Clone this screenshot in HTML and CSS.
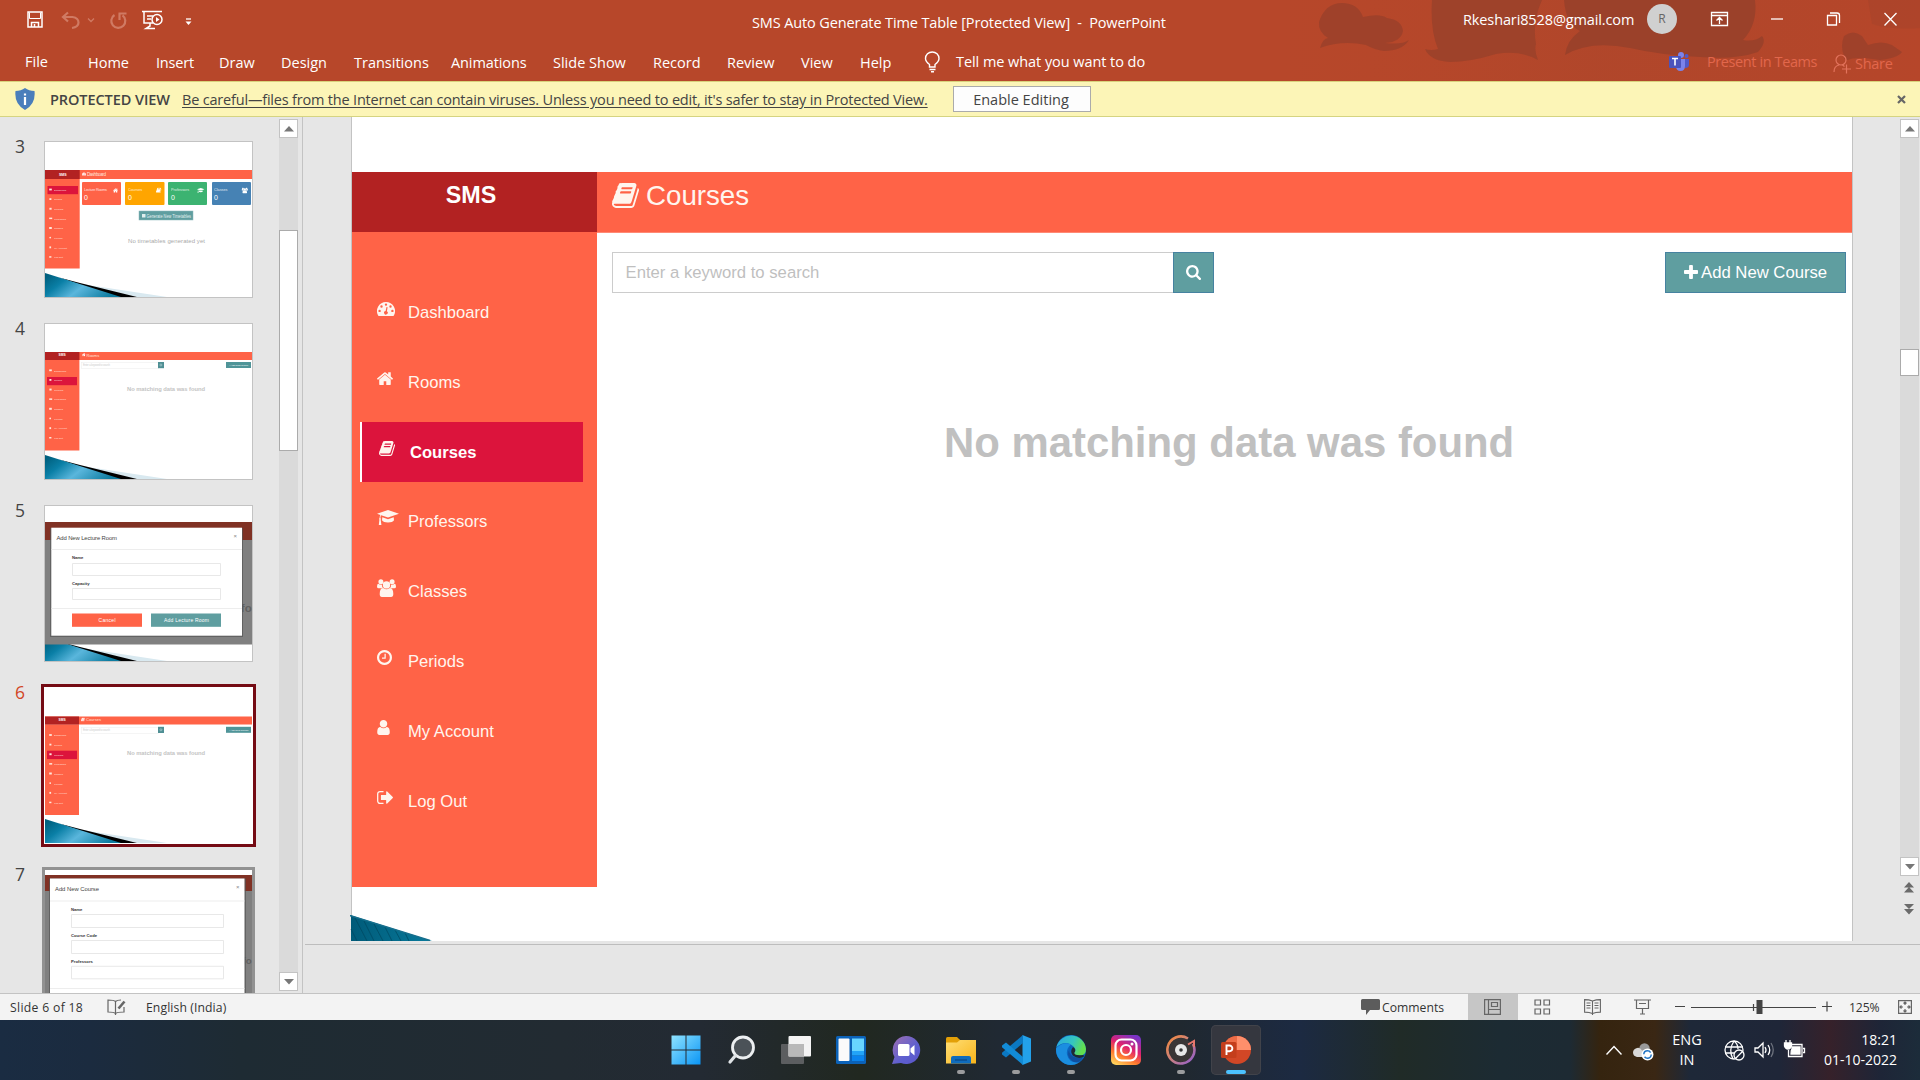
FILE: index.html
```
<!DOCTYPE html>
<html lang="en">
<head>
<meta charset="utf-8">
<title>SMS Auto Generate Time Table [Protected View] - PowerPoint</title>
<link rel="stylesheet" href="styles.css">
</head>
<body>
<svg class="defs" width="0" height="0">
  <defs>
    <linearGradient id="g-decor" x1="0" x2="1" y1="0.2" y2="0.6"><stop offset="0" stop-color="#00607f"/><stop offset=".25" stop-color="#0a7fa6"/><stop offset=".55" stop-color="#5ab6dc"/><stop offset="1" stop-color="#0e7ca0"/></linearGradient>
    <linearGradient id="g-win" x1="0" y1="0" x2="1" y2="1"><stop offset="0" stop-color="#8fe3ff"/><stop offset="1" stop-color="#0a95f5"/></linearGradient>
    <linearGradient id="g-fold" x1="0" y1="0" x2="1" y2="1"><stop offset="0" stop-color="#ffdf78"/><stop offset="1" stop-color="#f9b51a"/></linearGradient>
    <linearGradient id="g-chat" x1="0" y1="0" x2="1" y2="1"><stop offset="0" stop-color="#a070b0"/><stop offset=".6" stop-color="#5d5fd0"/><stop offset="1" stop-color="#5b55c8"/></linearGradient>
    <linearGradient id="g-insta" x1=".2" y1="1" x2=".7" y2="0"><stop offset="0" stop-color="#ffd35c"/><stop offset=".3" stop-color="#ff7a2e"/><stop offset=".6" stop-color="#e0226f"/><stop offset="1" stop-color="#7a34c8"/></linearGradient>
    <linearGradient id="g-edge" x1="0" y1="0" x2="1" y2=".3"><stop offset="0" stop-color="#2aa7e0"/><stop offset=".6" stop-color="#35c5c0"/><stop offset="1" stop-color="#62df50"/></linearGradient>
    <linearGradient id="g-disc" x1="0" y1="0" x2="1" y2="1"><stop offset="0" stop-color="#f58a3c"/><stop offset=".5" stop-color="#c88080"/><stop offset="1" stop-color="#8f5bd0"/></linearGradient>
    <symbol id="i-home" viewBox="97 236 1600 1300"><path d="M1472 992v480q0 26-19 45t-45 19h-384v-384h-256v384h-384q-26 0-45-19t-19-45v-480q0-1 .5-3t.5-3l575-474 575 474q1 2 1 6zm223-69l-62 74q-8 9-21 11h-3q-13 0-21-7l-692-577-692 577q-12 8-24 7-13-2-21-11l-62-74q-8-10-7-23.5t11-21.5l719-599q32-26 76-26t76 26l244 204v-195q0-14 9-23t23-9h192q14 0 23 9t9 23v408l219 182q10 8 11 21.5t-7 23.5z"/></symbol>
    <symbol id="i-book" viewBox="64 128 1664 1536"><path d="M1703 478q40 57 18 129l-275 906q-19 64-76.5 107.5t-122.5 43.5h-923q-77 0-148.5-53.5t-99.5-131.5q-24-67-2-127 0-4 3-27t4-37q1-8-3-21.5t-3-19.5q2-11 8-21t16.5-23.5 16.5-23.5q23-38 45-91.5t30-91.5q3-10 .5-30t-.5-28q3-11 17-28t17-23q21-36 42-92t25-90q1-9-2.5-32t.5-28q4-13 22-30.5t22-22.5q19-26 42.5-84.5t27.5-96.5q1-8-3-25.5t-2-26.5q2-8 9-18t18-23 17-21q8-12 16.5-30.5t15-35 16-36 19.5-32 26.5-23.5 36-11.5 47.5 5.5l-1 3q38-9 51-9h761q74 0 114 56t18 130l-274 906q-36 119-71.5 153.5t-128.5 34.5h-869q-27 0-38 15-11 16-1 43 24 70 144 70h923q29 0 56-15.5t35-41.5l300-987q7-22 5-57 38 15 59 43zm-1064 2q-4 13 2 22.5t20 9.5h608q13 0 25.5-9.5t16.5-22.5l21-64q4-13-2-22.5t-20-9.5h-608q-13 0-25.5 9.5t-16.5 22.5zm-83 256q-4 13 2 22.5t20 9.5h608q13 0 25.5-9.5t16.5-22.5l21-64q4-13-2-22.5t-20-9.5h-608q-13 0-25.5 9.5t-16.5 22.5z"/></symbol>
    <symbol id="i-clock" viewBox="128 128 1536 1536"><path d="M1024 544v448q0 14-9 23t-23 9h-320q-14 0-23-9t-9-23v-64q0-14 9-23t23-9h224v-352q0-14 9-23t23-9h64q14 0 23 9t9 23zm416 352q0-148-73-273t-198-198-273-73-273 73-198 198-73 273 73 273 198 198 273 73 273-73 198-198 73-273zm224 0q0 209-103 385.5t-279.5 279.5-385.5 103-385.5-103-279.5-279.5-103-385.5 103-385.5 279.5-279.5 385.5-103 385.5 103 279.5 279.5 103 385.5z"/></symbol>
    <symbol id="i-user" viewBox="256 128 1280 1536"><path d="M1536 1399q0 109-62.5 187t-150.5 78h-854q-88 0-150.5-78t-62.5-187q0-85 8.5-160.5t31.5-152 58.5-131 94-89 134.5-34.5q131 128 313 128t313-128q76 0 134.5 34.5t94 89 58.5 131 31.5 152 8.5 160.5zm-256-887q0 159-112.5 271.5t-271.5 112.5-271.5-112.5-112.5-271.5 112.5-271.5 271.5-112.5 271.5 112.5 112.5 271.5z"/></symbol>
    <symbol id="i-out" viewBox="64 256 1568 1280"><path d="M704 1440q0 4 1 20t.5 26.5-3 23.5-10 19.5-20.5 6.5h-320q-119 0-203.5-84.5t-84.5-203.5v-704q0-119 84.5-203.5t203.5-84.5h320q13 0 22.5 9.5t9.5 22.5q0 4 1 20t.5 26.5-3 23.5-10 19.5-20.5 6.5h-320q-66 0-113 47t-47 113v704q0 66 47 113t113 47h312l11.5 1 11.5 3 8 5.5 7 9 2 13.5zm928-544q0 26-19 45l-544 544q-19 19-45 19t-45-19-19-45v-288h-448q-26 0-45-19t-19-45v-384q0-26 19-45t45-19h448v-288q0-26 19-45t45-19 45 19l544 544q19 19 19 45z"/></symbol>
    <symbol id="i-search" viewBox="64 128 1664 1664"><path d="M1216 832q0-185-131.5-316.5t-316.5-131.5-316.5 131.5-131.5 316.5 131.5 316.5 316.5 131.5 316.5-131.5 131.5-316.5zm512 832q0 52-38 90t-90 38q-54 0-90-38l-343-342q-179 124-399 124-143 0-273.5-55.5t-225-150-150-225-55.5-273.5 55.5-273.5 150-225 225-150 273.5-55.5 273.5 55.5 225 150 150 225 55.5 273.5q0 220-124 399l343 343q37 37 37 90z"/></symbol>
    <symbol id="i-plus" viewBox="192 128 1408 1408"><path d="M1600 736v192q0 40-28 68t-68 28h-416v416q0 40-28 68t-68 28h-192q-40 0-68-28t-28-68v-416h-416q-40 0-68-28t-28-68v-192q0-40 28-68t68-28h416v-416q0-40 28-68t68-28h192q40 0 68 28t28 68v416h416q40 0 68 28t28 68z"/></symbol>
    <symbol id="i-dash" viewBox="0 0 18 14"><path fill-rule="evenodd" d="M9 0a9 9 0 0 1 7.8 13.5q-.3.5-.8.5H2q-.5 0-.8-.5A9 9 0 0 1 9 0zM2.6 7.7a1.2 1.2 0 1 0 0 2.4 1.2 1.2 0 0 0 0-2.4zM4.5 3.3a1.2 1.2 0 1 0 0 2.4 1.2 1.2 0 0 0 0-2.4zM9 1.4a1.2 1.2 0 1 0 0 2.4 1.2 1.2 0 0 0 0-2.4zM13.5 3.3a1.2 1.2 0 1 0 0 2.4 1.2 1.2 0 0 0 0-2.4zM15.4 7.7a1.2 1.2 0 1 0 0 2.4 1.2 1.2 0 0 0 0-2.4zM9.5 5l-.9 3.9a1.8 1.8 0 1 0 1.3.3l.7-4z"/></symbol>
    <symbol id="i-cap" viewBox="0 0 22 15"><path d="M11 0l11 3.8L11 7.6 4.2 5.3Q3.4 6 3.4 8q.9.6.3 1.7L4.400 15H1.800l.6-5.300Q1.700 8.700 2.600 8q.1-2 .8-3L0 3.800zM5.300 7.200L11 9.200l5.700-2 .3 3Q15.500 12.400 11 12.400T5 10.200z"/></symbol>
    <symbol id="i-users" viewBox="0 0 19 18"><path d="M3.900.3a2.500 2.500 0 1 1 0 5 2.500 2.500 0 0 1 0-5zM15.100.3a2.500 2.500 0 1 1 0 5 2.500 2.500 0 0 1 0-5zM9.500 2.200a3.700 3.700 0 1 1 0 7.400 3.700 3.700 0 0 1 0-7.400zM5.200 9.200H1.700Q0 9.200 0 7.700 0 4.800 1.300 4.800q2 1.400 3.600.8-.2 2 .9 3.200zM13.800 9.200h3.500q1.700 0 1.700-1.500 0-2.900-1.300-2.900-2 1.400-3.600.8.200 2-.9 3.200zM6.200 9q1.500 1.300 3.300 1.300T12.800 9q3.500 0 3.500 6 0 3-2.300 3H5q-2.300 0-2.300-3 0-6 3.500-6z"/></symbol>
    <symbol id="t-decor" viewBox="0 0 207 155"><path d="M30 141l92 14H92z" fill="#d9e9f0"/><path d="M14 135.500L35 141l57 14H70z" fill="#000"/><path d="M0 131l76 24H0z" fill="url(#g-decor)"/></symbol>
    <symbol id="t-nav" viewBox="0 0 207 155"><g fill="#fff0e6" font-size="2.500" opacity=".85"><text x="9" y="48.800">Dashboard</text><text x="9" y="58.400">Rooms</text><text x="9" y="68">Courses</text><text x="9" y="77.700">Professors</text><text x="9" y="87.300">Classes</text><text x="9" y="97">Periods</text><text x="9" y="106.600">My Account</text><text x="9" y="116.300">Log Out</text></g><g fill="#ffe6da"><rect x="4.200" y="46.600" width="2.600" height="1.800"/><rect x="4.400" y="56.200" width="2" height="1.800"/><rect x="4.400" y="65.800" width="2.200" height="1.900"/><rect x="4.200" y="75.600" width="3" height="1.500"/><rect x="4.200" y="85" width="2.600" height="2"/><circle cx="5.200" cy="95.600" r=".9"/><rect x="4.400" y="104.400" width="1.700" height="1.900"/><rect x="4.200" y="114.200" width="2.200" height="1.500"/></g></symbol>
    <symbol id="t-empty" viewBox="0 0 207 155"><rect x="36.500" y="38.500" width="77" height="6" fill="#fff" stroke="#eee" stroke-width=".6"/><text x="38" y="42.400" font-size="2.600" fill="#ccc" textLength="27">Enter a keyword to search</text><rect x="113" y="38" width="6" height="6.200" fill="#4f8f94"/><circle cx="115.900" cy="41" r="1" fill="none" stroke="#cfe5e6" stroke-width=".5"/><rect x="181" y="38" width="25" height="6" fill="#4f9498"/><text x="82" y="66.700" font-size="5.800" font-weight="bold" fill="#c4c4c4" textLength="78">No matching data was found</text></symbol>
  </defs>
</svg>

<header class="ribbon">
  <svg class="ribbon-art" width="640" height="81" viewBox="0 0 640 81">
    <defs><linearGradient id="g-fade" x1="0" x2="1"><stop offset="0" stop-color="#b0472a" stop-opacity="0"/><stop offset=".5" stop-color="#a5452b" stop-opacity=".35"/><stop offset="1" stop-color="#b5452a" stop-opacity=".5"/></linearGradient></defs>
    <rect width="640" height="81" fill="url(#g-fade)"/>
    <g fill="#9b412a">
      <path d="M40 48Q43 38 48 38Q38 32 39 22Q45 3 62 3Q78 3 83 17Q100 13 107 18Q122 20 123 31Q121 42 105 43Q122 45 129 40Q122 51 104 51Q95 50 86 45Q62 40 40 48z" opacity=".85"/>
      <path d="M152 0H262Q252 22 256 44Q254 50 258 60Q240 50 216 54Q190 62 170 62Q150 61 145 49Q151 51 158 49Q150 30 152 0z" opacity=".9"/>
      <path d="M284 0H475Q478 24 463 40Q475 42 482 36Q487 42 478 52Q455 60 420 57Q380 55 350 48Q310 40 285 55Q287 40 300 31Q286 25 284 0z"/>
      <path d="M564 56Q560 46 564 36Q573 29 582 36Q586 42 588 45Q602 40 612 45L622 52Q618 58 600 60Q575 56 568 60Q563 60 564 56z" opacity=".85"/>
      <path d="M588 0h52v28q-30 2-48-4z" opacity=".3"/>
    </g>
  </svg>
  <div class="title-row">
    <div class="quick">
      <svg width="175" height="24" viewBox="0 0 175 24" fill="none" stroke="#fff" stroke-width="1.500">
        <path d="M2 3h14v15H2zM5.500 18v-4.500h7V18M8.500 18v-3"/><path d="M3.500 3.500v6h11v-6" stroke-width="1"/>
        <g stroke="#d07a63" stroke-width="2.200"><path d="M42 3.500l-5 4.500 5 4.500M37.500 8h9q6 1 6 5.500T46 19"/><path d="M62 9.500l3 3 3-3" stroke-width="1.300"/><path d="M88.500 6a7 7 0 1 0 8 0.300M93.500 11V4.500M92.500 4.500h8"/></g>
        <path d="M116 2.500h20M118 3v11h9M121 7h6M121 10h4M124 14v3l-4 2.500h9"/><circle cx="131" cy="10.500" r="5"/><path d="M130 8l3.500 2.500L130 13z" fill="#fff" stroke="none"/>
        <path d="M160 10h5" stroke-width="1.300"/><path d="M159.500 12.500h6l-3 3.500z" fill="#fff" stroke="none"/>
      </svg>
    </div>
    <div class="doc-title">SMS Auto Generate Time Table [Protected View]&nbsp; -&nbsp; PowerPoint</div>
    <div class="account">Rkeshari8528@gmail.com</div>
    <div class="avatar">R</div>
    <svg class="win-ctl" width="200" height="24" viewBox="0 0 200 24" fill="none" stroke="#fff" stroke-width="1.300">
      <path d="M6.500 5.500h16v13h-16zM7 8.500h15M14.500 17v-6M11.500 13.500l3-3 3 3"/><path d="M66 12h12"/><path d="M122.500 8.500h9v9.500h-9zM125 6h7q2.500 0 2.500 2.500V16"/><path d="M179.500 6l12 12.500M191.500 6l-12 12.500"/>
    </svg>
  </div>
  <nav class="tab-row">
    <span class="t-file">File</span><span class="t-home">Home</span><span class="t-ins">Insert</span><span class="t-draw">Draw</span><span class="t-des">Design</span><span class="t-tra">Transitions</span><span class="t-ani">Animations</span><span class="t-sli">Slide Show</span><span class="t-rec">Record</span><span class="t-rev">Review</span><span class="t-view">View</span><span class="t-help">Help</span>
    <svg class="bulb" width="17" height="22" viewBox="0 0 17 22" fill="none" stroke="#fff" stroke-width="1.400"><path d="M5.500 16v-2.500Q1.500 10.500 1.500 7.500a6.700 6.500 0 0 1 13.500 0Q15 10.500 11 13.500V16zM5.500 18.500h6M7 20.700h3"/></svg>
    <span class="tell">Tell me what you want to do</span>
    <svg class="teams" width="20" height="19" viewBox="0 0 20 19"><circle cx="12" cy="3" r="3" fill="#7b83eb"/><circle cx="17.500" cy="4" r="2" fill="#5059c9"/><path d="M14 7h6v6q0 3-4 3z" fill="#5059c9"/><path d="M7 7h9v7q0 5-4.500 5T7 14z" fill="#7b83eb"/><rect y="4" width="12" height="12" rx="1" fill="#4b53bc"/><path d="M3 6.500h6M6 7v6.500" stroke="#fff" stroke-width="1.600"/></svg>
    <span class="present">Present in Teams</span>
    <svg class="share-i" width="19" height="20" viewBox="0 0 19 20" fill="none" stroke="#e2735c" stroke-width="1.200"><circle cx="8" cy="6" r="5"/><path d="M1 18q0-6 5-7M9.500 11l2 1.500M9 15h9M13.500 10.500v9"/></svg>
    <span class="share">Share</span>
  </nav>
</header>

<section class="warn">
  <svg width="20" height="22" viewBox="0 0 20 22"><path d="M10 0q4 3 9.500 3 1.500 13-9.500 19Q-1 16 .5 3 6 3 10 0z" fill="#4a7ebb"/><path d="M10 9v8M10 5.500v2" stroke="#fff" stroke-width="2.200"/></svg>
  <strong>PROTECTED VIEW</strong>
  <a>Be careful—files from the Internet can contain viruses. Unless you need to edit, it's safer to stay in Protected View.</a>
  <button>Enable Editing</button>
  <svg class="warn-x" width="9" height="9" viewBox="0 0 9 9"><path d="M1 1l7 7M8 1L1 8" stroke="#666" stroke-width="2.200"/></svg>
</section>

<main class="work">
  <aside class="panel">
    <ol class="thumbs">
      <li><b>3</b><svg class="thumb" viewBox="0 0 207 155">
        <rect width="207" height="155" fill="#fff"/><use href="#t-decor" width="207" height="155"/>
        <path d="M0 28h207v9H0z" fill="#ff6347"/><path d="M0 37h34.700v89.500H0z" fill="#ff6347"/><path d="M0 28h34.700v9H0z" fill="#b22222"/>
        <text x="14" y="33.500" font-size="3.500" font-weight="bold" fill="#fff">SMS</text><use href="#i-dash" x="37" y="30" width="4" height="4" fill="#fff"/><text x="42" y="34" font-size="4.500" fill="#ffe2da" textLength="19">Dashboard</text>
        <rect x="2.500" y="44" width="30.500" height="8.200" fill="#dc143c"/><use href="#t-nav" y="0" width="207" height="155"/>
        <g><rect x="37" y="40" width="39" height="23" rx="1" fill="#ff6347"/><rect x="80" y="40" width="39.500" height="23" rx="1" fill="#ffa500"/><rect x="123" y="40" width="39" height="23" rx="1" fill="#3cb371"/><rect x="167" y="40" width="39" height="23" rx="1" fill="#4682b4"/></g>
        <g fill="#fff" font-size="3.800"><text x="39" y="49" opacity=".8" textLength="23">Lecture Rooms</text><text x="83" y="49" opacity=".8">Courses</text><text x="126" y="49" opacity=".8">Professors</text><text x="169" y="49" opacity=".8">Classes</text></g>
        <g fill="#fff" font-size="7"><text x="39" y="57.500">0</text><text x="83" y="57.500">0</text><text x="126" y="57.500">0</text><text x="169" y="57.500">0</text></g>
        <g fill="#fff"><use href="#i-home" x="68" y="46" width="5" height="5"/><use href="#i-book" x="111" y="45.500" width="5.500" height="5.500"/><use href="#i-cap" x="152" y="45.500" width="7.500" height="6"/><use href="#i-users" x="196.500" y="45.500" width="6.500" height="6"/></g>
        <rect x="94" y="69" width="54" height="9" fill="#5f9ea0" stroke="#8db9bb" stroke-width=".5"/><rect x="97" y="72" width="3.500" height="3.500" fill="#dfeeee"/><text x="101.500" y="75.500" font-size="4.500" fill="#e3f0f0" textLength="44.500" lengthAdjust="spacingAndGlyphs">Generate New Timetables</text>
        <text x="83" y="100.500" font-size="6" fill="#aaa" textLength="77">No timetables generated yet</text>
      </svg></li>
      <li><b>4</b><svg class="thumb" viewBox="0 0 207 155">
        <rect width="207" height="155" fill="#fff"/><use href="#t-decor" width="207" height="155"/>
        <path d="M0 28h207v8H0z" fill="#ff6347"/><path d="M0 36h34.400v90.500H0z" fill="#ff6347"/><path d="M0 28h34.400v8H0z" fill="#b22222"/>
        <text x="13.500" y="32.300" font-size="3.300" font-weight="bold" fill="#fff">SMS</text><use href="#i-home" x="37" y="29" width="3.500" height="3.500" fill="#fff"/><text x="41.500" y="32.500" font-size="4" fill="#ffe2da">Rooms</text>
        <rect x="2" y="53" width="30" height="8.200" fill="#dc143c"/><use href="#t-nav" y="-1.200" width="207" height="155"/><use href="#t-empty" width="207" height="155"/><text x="184" y="42" font-size="2.500" fill="#fff" textLength="19" lengthAdjust="spacingAndGlyphs">+Add New Room</text>
      </svg></li>
      <li><b>5</b><svg class="thumb" viewBox="0 0 207 155">
        <rect width="207" height="155" fill="#fff"/><use href="#t-decor" width="207" height="155"/>
        <path d="M0 16h207v18H0z" fill="#803124"/><path d="M0 34h207v104.500H0z" fill="#808080"/><text x="195.800" y="105.500" font-size="11.500" font-weight="bold" fill="#606060">fo</text>
        <rect x="5" y="22" width="193" height="109" fill="#555" opacity=".7"/><rect x="6.300" y="21.700" width="190.700" height="108" fill="#fff"/>
        <text x="11.500" y="34.300" font-size="5.900" fill="#444" textLength="60.500">Add New Lecture Room</text><text x="188.500" y="32" font-size="6" fill="#888">×</text>
        <path d="M6.300 43.500H197M6.300 102.500H197" stroke="#e8e8e8" stroke-width=".8"/><g font-size="4.200" font-weight="bold" fill="#333"><text x="27" y="53.300">Name</text><text x="27" y="79">Capacity</text></g>
        <path d="M27.500 57.500h148V69.500h-148zM27.500 82.500h148V93.500h-148z" fill="#fff" stroke="#e2e2e2" stroke-width=".8"/>
        <rect x="27" y="107.500" width="70" height="13.300" fill="#ff6347"/><rect x="106" y="107.500" width="70" height="13.300" fill="#5f9ea0"/><g fill="#fff" font-size="5"><text x="53.500" y="116" textLength="17">Cancel</text><text x="119" y="116" textLength="45">Add Lecture Room</text></g>
      </svg></li>
      <li class="sel"><b>6</b><svg class="thumb" viewBox="0 0 207 155">
        <rect width="207" height="155" fill="#fff"/><use href="#t-decor" width="207" height="155"/>
        <path d="M0 28.500h207v8H0z" fill="#ff6347"/><path d="M0 36.500h34v90.500H0z" fill="#ff6347"/><path d="M0 28.500h34v8H0z" fill="#b22222"/>
        <text x="13.500" y="33" font-size="3.300" font-weight="bold" fill="#fff">SMS</text><use href="#i-book" x="36" y="29.500" width="4" height="4" fill="#fff"/><text x="41" y="33.300" font-size="4" fill="#ffe2da">Courses</text>
        <rect x="2" y="62.700" width="30" height="8.400" fill="#dc143c"/><use href="#t-nav" y="-.5" width="207" height="155"/><use href="#t-empty" y=".8" width="207" height="155"/><text x="184" y="42.800" font-size="2.500" fill="#fff" textLength="19.500" lengthAdjust="spacingAndGlyphs">+Add New Course</text>
      </svg></li>
      <li class="hov"><b>7</b><svg class="thumb" viewBox="0 0 207 155">
        <rect width="207" height="155" fill="#fff"/><path d="M0 5h207v16H0z" fill="#803124"/><path d="M0 21h207v134H0z" fill="#808080"/><text x="197.500" y="94" font-size="9.800" font-weight="bold" fill="#606060">fo</text>
        <rect x="4" y="8.500" width="197" height="146" fill="#555" opacity=".7"/><rect x="5" y="8.500" width="194.500" height="146" fill="#fff"/>
        <text x="10" y="21.300" font-size="5.900" fill="#444" textLength="44">Add New Course</text><text x="191" y="18.500" font-size="6" fill="#888">×</text>
        <path d="M5 31H199.500M5 118.500H199.500" stroke="#e8e8e8" stroke-width=".8"/><g font-size="4.200" font-weight="bold" fill="#333"><text x="26" y="40.700">Name</text><text x="26" y="66.700">Course Code</text><text x="26" y="92.700">Professors</text></g>
        <path d="M26.500 44.500h152v13h-152zM26.500 70.500h152v13h-152zM26.500 96.300h152v12.500h-152z" fill="#fff" stroke="#e2e2e2" stroke-width=".8"/>
      </svg></li>
    </ol>
    <div class="sbar left">
      <span class="sbtn"><svg width="10" height="6"><path d="M0 5.500L5 0l5 5.500z" fill="#777"/></svg></span>
      <span class="grip"></span>
      <span class="sbtn end"><svg width="10" height="6"><path d="M0 0h10L5 5.500z" fill="#777"/></svg></span>
    </div>
  </aside>

  <section class="editor">
    <div class="stage">
      <div class="slide">
        <div class="app">
          <div class="side">
            <div class="brand">SMS</div>
            <ul class="menu">
              <li><svg width="18" height="14"><use href="#i-dash"/></svg><span>Dashboard</span></li>
              <li><svg width="16" height="13"><use href="#i-home"/></svg><span>Rooms</span></li>
              <li class="active"><svg width="16" height="15"><use href="#i-book"/></svg><span>Courses</span></li>
              <li><svg width="22" height="15"><use href="#i-cap"/></svg><span>Professors</span></li>
              <li><svg width="19" height="18"><use href="#i-users"/></svg><span>Classes</span></li>
              <li><svg width="15" height="15"><use href="#i-clock"/></svg><span>Periods</span></li>
              <li><svg width="13" height="15"><use href="#i-user"/></svg><span>My Account</span></li>
              <li><svg width="16" height="13"><use href="#i-out"/></svg><span>Log Out</span></li>
            </ul>
          </div>
          <div class="content">
            <div class="page-head"><svg width="27" height="25"><use href="#i-book"/></svg><span>Courses</span></div>
            <div class="tools">
              <div class="search">Enter a keyword to search</div>
              <div class="go"><svg width="15" height="15"><use href="#i-search"/></svg></div>
              <div class="add"><svg width="14" height="14"><use href="#i-plus"/></svg><span>Add New Course</span></div>
            </div>
            <h1>No matching data was found</h1>
          </div>
        </div>
        <svg class="corner" width="82" height="26" viewBox="0 0 82 26"><defs><linearGradient id="g-corner"><stop offset="0" stop-color="#005a78"/><stop offset="1" stop-color="#087a9c"/></linearGradient></defs><path d="M0 0l82 26H1V2z" fill="url(#g-corner)"/><path d="M1 14l6 12M5 3l12 23M14 6l10 20M24 9l9 17M35 12l7 14M45 15l6 11M55 18l4 8" stroke="#004a62" stroke-width=".9" opacity=".8"/><path d="M0 .5l80 25" stroke="#176f8d" stroke-width="1.500"/></svg>
      </div>
      <div class="sbar right">
        <span class="sbtn"><svg width="10" height="6"><path d="M0 5.500L5 0l5 5.500z" fill="#777"/></svg></span>
        <span class="grip"></span>
        <span class="sbtn end"><svg width="10" height="6"><path d="M0 0h10L5 5.500z" fill="#777"/></svg></span>
        <svg class="jump" width="10" height="33" viewBox="0 0 10 33"><path d="M0 5.500L5 0l5 5.500zM0 10.500L5 5l5 5.500zM0 22h10l-5 5zM0 27h10l-5 5.500z" fill="#6b6b6b"/></svg>
      </div>
    </div>
    <div class="notes"></div>
  </section>
</main>

<footer class="status">
  <span class="s-count">Slide 6 of 18</span>
  <svg class="s-book" width="19" height="16" viewBox="0 0 19 16" fill="none" stroke="#666" stroke-width="1.200"><path d="M8.500 2.500Q7 1 1 1v12q6 0 7.500 1.500Q10 13 17 13V8M8.500 2.500V16M8.500 2.500Q10 1 14 1"/><path d="M11.500 9.500L17.500 2.500" stroke-width="2.600"/></svg>
  <span class="s-lang">English (India)</span>
  <svg class="s-com" width="19" height="16" viewBox="0 0 19 16"><path d="M1.500 0h16Q19 0 19 1.500v8Q19 11 17.500 11H9l-4 5v-5H1.500Q0 11 0 9.500v-8Q0 0 1.500 0z" fill="#5c5c5c"/></svg>
  <span class="s-comt">Comments</span>
  <span class="view on"><svg width="17" height="16" viewBox="0 0 17 16" fill="none" stroke="#666" stroke-width="1.200"><path d="M.6.600h15.800v14.800H.6zM4.500.6v14.800M4.500 10.500h12M7.500 3.500h6v4h-6z"/></svg></span>
  <span class="view"><svg width="17" height="16" viewBox="0 0 17 16" fill="none" stroke="#666" stroke-width="1.200"><path d="M1 1h5.500v5H1zM10 1h5.500v5H10zM1 10h5.500v5H1zM10 10h5.500v5H10z"/></svg></span>
  <span class="view"><svg width="17" height="16" viewBox="0 0 17 16" fill="none" stroke="#666" stroke-width="1.100"><path d="M8.500 2Q5 .6.600.6v12.500q5 0 7.900 1.500 3-1.500 7.900-1.500V.6Q12 .6 8.500 2zV16M2.500 4h4M2.500 6.500h4M2.500 9h4M10.500 4h4M10.500 6.500h4M10.500 9h4"/></svg></span>
  <span class="view"><svg width="17" height="16" viewBox="0 0 17 16" fill="none" stroke="#666" stroke-width="1.200"><path d="M0 1h17M2.500 1v8.500h12V1M5 4.500h7M8.500 9.500V15M6 15h5"/></svg></span>
  <svg class="zoomer" width="158" height="16" viewBox="0 0 158 16" stroke="#444" fill="none" stroke-width="1.200"><path d="M0 7.500h10M16 8.500h125M78.500 5v7M147 7.500h10M152 2.500v10"/><path d="M84.500 1v14" stroke-width="6"/></svg>
  <span class="s-pct">125%</span>
  <svg class="s-fit" width="14" height="14" viewBox="0 0 14 14" fill="none" stroke="#666" stroke-width="1.200"><path d="M.6.600h12.800v12.800H.6zM7 2v3M7 9v3M2 7h3M9 7h3M5.500 3.500L7 2l1.500 1.500M5.500 10.500L7 12l1.500-1.500M3.500 5.500L2 7l1.500 1.500M10.500 5.500L12 7l-1.500 1.500"/></svg>
</footer>

<div class="taskbar">
  <div class="apps">
    <span><svg width="30" height="30" viewBox="0 0 30 30"><path d="M.5.500h14v14H.5zM15.500.500h14v14h-14zM.5 15.500h14v14H.5zM15.500 15.500h14v14h-14z" fill="url(#g-win)"/></svg></span>
    <span><svg width="30" height="30" viewBox="0 0 30 30"><circle cx="17" cy="12.500" r="10.500" fill="#4b5258" stroke="#eceff1" stroke-width="2.800"/><path d="M9.500 20.500L4 27" stroke="#dfe3e6" stroke-width="3.200" stroke-linecap="round"/></svg></span>
    <span><svg width="30" height="30" viewBox="0 0 30 30"><rect y="9" width="23" height="20" rx="1" fill="#5c5e60"/><rect x="7.500" y="1" width="22.500" height="20.500" rx="1" fill="#f4f4f4"/><path d="M7.500 9H23v12.500H7.500z" fill="#b9b9b9"/></svg></span>
    <span><svg width="30" height="30" viewBox="0 0 30 30"><rect y="1" width="30" height="28" rx="1.500" fill="#0b62b8"/><rect x="2.500" y="3.500" width="11" height="22.500" rx="1" fill="#fafafa"/><path d="M16 3.500h12V16H16z" fill="#68d5ff"/><path d="M16 16h12v4.500H16z" fill="#22a4f8"/><path d="M16 21h12v5H16z" fill="#0a84ee"/></svg></span>
    <span><svg width="30" height="30" viewBox="0 0 30 30"><path d="M15 1a14 14 0 1 1-5 27l-9 1 2.500-7A14 14 0 0 1 15 1z" fill="url(#g-chat)"/><rect x="7" y="9" width="11.500" height="12" rx="1.500" fill="#fff"/><path d="M19.500 13.500l4-3.500v10.500l-4-3.500z" fill="#fff"/></svg></span>
    <span class="run"><svg width="30" height="30" viewBox="0 0 30 30"><path d="M0 4h11l3 1h16v23.500H0z" fill="url(#g-fold)"/><path d="M0 3.500Q0 2 1.500 2H11l3 3-3 2.500H0z" fill="#e3a008"/><path d="M5 28.500V23q0-2 2-2h16q2 0 2 2v5.500z" fill="#0f6cbd"/><path d="M9 25h12" stroke="#0a4a88" stroke-width="1.300"/></svg></span>
    <span class="run"><svg width="30" height="30" viewBox="0 0 30 30"><path d="M21.500 0L30 3.500v23L21.500 30z" fill="#23a1ea"/><path d="M22 0v8L5 22.500 1 19.500v-1.800z" fill="#0b78c2"/><path d="M22 30v-8L5 7.500 1 10.500v1.800z" fill="#128bd6"/></svg></span>
    <span class="run"><svg width="30" height="30" viewBox="0 0 30 30"><circle cx="15" cy="15" r="15" fill="#0c66bf"/><path d="M.5 12A15 15 0 0 1 30 14q0 6-6 6.500-6 .500-6-2.500 2.500-3 0-6Q10 4 .5 12z" fill="url(#g-edge)"/><path d="M.2 13Q8 6 15 9.500q-5 4-4 10 2 9 12 8-4 2.500-8 2.500A15 15 0 0 1 .2 13z" fill="#1b8ee0"/><path d="M15.500 11q-3 2.500-2 6.500 3 7 13.500 5Q23 29 17 26.500q-9-6-1.500-15.500z" fill="#104f9f"/><path d="M17 12q4 2.500 1.200 6Q19 21 27 20l1.800 1q-6 4-12-.5-3.500-4 .2-8.500z" fill="#1f2a33"/></svg></span>
    <span><svg width="30" height="30" viewBox="0 0 30 30"><rect width="30" height="30" rx="5" fill="url(#g-insta)"/><g fill="none" stroke="#fff" stroke-width="2.200"><rect x="4.500" y="4.500" width="21" height="21" rx="6"/><circle cx="15" cy="15" r="5"/></g><circle cx="21" cy="9" r="1.500" fill="#fff"/></svg></span>
    <span class="run"><svg width="30" height="30" viewBox="0 0 30 30"><circle cx="15" cy="15" r="12" fill="#3a3636"/><path d="M22 3.500A13.500 13.500 0 1 0 27 9" fill="none" stroke="url(#g-disc)" stroke-width="2.600"/><path d="M22 9.500l6-3.500v6" fill="none" stroke="#e5776c" stroke-width="2"/><circle cx="15" cy="15" r="6" fill="#e8e8e8"/><circle cx="15" cy="15" r="1.800" fill="#333"/></svg></span>
    <span class="run cur"><svg width="30" height="30" viewBox="0 0 30 30"><circle cx="16" cy="15" r="14" fill="#d24726"/><path d="M16 1a14 14 0 0 1 14 14H16z" fill="#ff8f6b"/><path d="M16 1v14H2A14 14 0 0 1 16 1z" fill="#ed6c47"/><rect y="7" width="15.500" height="16" rx="1.500" fill="#c43e1c"/><path d="M5.500 20v-9.500h3a2.800 2.800 0 0 1 0 5.700h-3" fill="none" stroke="#fff" stroke-width="1.900"/></svg></span>
  </div>
  <svg class="chev" width="16" height="10" viewBox="0 0 16 10" fill="none" stroke="#fff" stroke-width="1.400"><path d="M.5 9.500L8 1.500l7.500 8"/></svg>
  <svg class="cloud" width="21" height="18" viewBox="0 0 21 18"><circle cx="11.500" cy="5.500" r="5.200" fill="#999"/><path d="M4 5q3-1 5 2.500L13 11l-3 3H4Q0 13 0 9.500T4 5z" fill="#d8d8d8"/><circle cx="14.500" cy="11.500" r="6" fill="#fff"/><circle cx="14.500" cy="11.500" r="3.700" fill="none" stroke="#1f73c4" stroke-width="1.500" stroke-dasharray="9 2.600"/></svg>
  <div class="lang">ENG<br>IN</div>
  <svg class="sys" width="82" height="21" viewBox="0 0 82 21" fill="none" stroke="#fff" stroke-width="1.300">
    <circle cx="10" cy="10" r="9"/><path d="M1 7h18M1 13h9M10 1Q4 10 9 19M10 1q4 3 4 8"/><circle cx="15" cy="15" r="5" fill="#1e2738"/><path d="M11.500 18.500l7-7"/>
    <path d="M31 8h3l5-5v14l-5-5h-3zM41 7q2 3 0 6M44 5q3.500 5 0 10"/><path d="M47 3q4.500 7 0 14" opacity=".35"/>
    <path d="M67 4.500h11v12H64.500V10M79 8.500h1.500v4H79"/><path d="M68 7h8v7h-9q0-4 1-5z" fill="#fff"/><path d="M60.500 3h7v3q-1 3-3.500 3t-3.500-3zM62 0v3M66 0v3" fill="#fff"/>
  </svg>
  <div class="clock">18:21<br>01-10-2022</div>
</div>
</body>
</html>
```
FILE: styles.css
```
* { box-sizing: border-box; }
body {
  margin: 0;
  width: 1920px;
  height: 1080px;
  overflow: hidden;
  display: flex;
  flex-direction: column;
  background: #e6e6e6;
  font-family: "Open Sans", "Noto Sans", sans-serif;
  font-size: 14.5px;
}
svg { display: block; flex: none; }
.defs { position: absolute; }
span, div, a, strong { white-space: nowrap; }

/* Title bar and tabs */
.ribbon { position: relative; height: 81px; flex: none; background: #b7472a; color: #fff; }
.ribbon-art { position: absolute; right: 0; top: 0; }
.title-row, .tab-row { position: relative; display: flex; }
.title-row { height: 41px; line-height: 34px; align-items: flex-start; }
.quick { width: 752px; padding: 9px 0 0 26px; flex: none; }
.doc-title { width: 711px; line-height: 45px; letter-spacing: -.12px; }
.account { width: 184px; line-height: 39px; letter-spacing: -.12px; }
.avatar { width: 30px; height: 30px; margin-top: 4px; border-radius: 50%; background: #d0d0d0; color: #666; text-align: center; line-height: 30px; font-size: 12px; }
.win-ctl { margin: 7px 0 0 28px; }
.tab-row { height: 40px; padding-left: 25px; line-height: 43px; align-items: flex-start; }
.tab-row > span { flex: none; }
.tab-row .t-file { width: 63px; line-height: 41px; }
.t-home { width: 68px; }
.t-ins { width: 63px; letter-spacing: -.2px; }
.t-draw { width: 62px; }
.t-des { width: 73px; }
.t-tra { width: 97px; }
.t-ani { width: 102px; letter-spacing: -.1px; }
.t-sli { width: 100px; }
.t-rec { width: 74px; }
.t-rev { width: 74px; }
.t-view { width: 59px; }
.t-help { width: 64px; }
.bulb { margin: 10px 15px 0 0; }
.tab-row .tell { width: 713px; line-height: 41px; letter-spacing: -.06px; }
.teams { margin: 11px 18px 0 0; }
.tab-row .present { width: 126px; line-height: 41px; color: #e2674c; letter-spacing: -.4px; }
.share-i { margin: 13px 3px 0 0; }
.tab-row .share { line-height: 45px; color: #e2674c; letter-spacing: -.3px; }

/* Protected view message bar */
.warn { height: 36px; flex: none; display: flex; align-items: center; padding-left: 15px; background: #fcf5b7; border-top: 1px solid #d9d27c; border-bottom: 1px solid #d5d481; color: #444; }
.warn strong { width: 132px; margin-left: 15px; font-weight: 600; letter-spacing: -.08px; }
.warn a { width: 771px; letter-spacing: -.19px; text-decoration: underline; text-underline-offset: 2px; }
.warn button { width: 138px; height: 26px; padding: 0 2px 0 0; border: 1px solid #ababab; background: #fdfdfd; color: #444; font: inherit; line-height: 26px; }
.warn-x { margin: 0 14px 0 auto; }

/* Work area */
.work { height: 876px; flex: none; display: flex; }
.panel { width: 303px; flex: none; display: flex; overflow: hidden; border-right: 1px solid #c3c3c3; }
.thumbs { margin: 0; padding: 24px 0 0; width: 279px; height: 876px; overflow: hidden; list-style: none; }
.thumbs li { display: flex; height: 182px; }
.thumbs b { width: 44px; padding-left: 15px; font-size: 17.500px; font-weight: 400; line-height: 10px; color: #444; }
.thumb { width: 209px; height: 157px; border: 1px solid #c3c3c3; font-family: "Liberation Sans", sans-serif; }
.sel b { color: #d24726; }
.sel .thumb { border-color: #fff; outline: 3px solid #750b14; }
.hov .thumb { border-color: #929292; outline: 2px solid #929292; }

.sbar { width: 19px; display: flex; flex-direction: column; background: #dadada; }
.sbtn { height: 19px; flex: none; display: flex; align-items: center; justify-content: center; background: #fff; border: 1px solid #c3c3c3; }
.grip { background: #fff; border: 1px solid #ababab; }
.sbar.left { margin-top: 2px; height: 872px; }
.left .grip { height: 221px; margin-top: 92px; }
.sbtn.end { margin-top: auto; }

.editor { flex: 1; display: flex; flex-direction: column; }
.stage { height: 827px; flex: none; display: flex; }
.slide { position: relative; width: 1502px; height: 824px; margin-left: 48px; padding-top: 55px; background: #fff; border: solid #c3c3c3; border-width: 0 1px; }
.corner { position: absolute; left: -2px; bottom: 0; }
.sbar.right { width: 19px; height: 757px; margin: 2px 0 0 47px; }
.right .grip { height: 27px; margin-top: 211px; flex: none; }
.right .jump { height: 33px; margin: 6px 0 -39px 4px; }
.notes { flex: 1; margin-left: 2px; border-top: 1px solid #bdbdbd; }

/* Slide content */
.app { display: grid; grid-template-columns: 245px 1fr; height: 715px; font-family: "Liberation Sans", Arial, sans-serif; }
.side { background: #ff6347; color: #fff5ee; }
.brand { height: 60px; background: #b22222; color: #fff; font-size: 23.300px; font-weight: 700; text-align: center; line-height: 46px; padding-right: 7px; }
.menu { list-style: none; margin: 50px 0 0; padding: 0 14px 0 8px; font-size: 16.600px; line-height: 60px; display: flex; flex-direction: column; gap: 9.800px; }
.menu li { display: grid; grid-template-columns: 31px 1fr; align-items: center; height: 60px; padding-left: 17px; }
.menu svg { margin-bottom: 7px; fill: #fff5ee; }
.menu span { padding-top: 2px; line-height: 58px; }
.menu .active { background: #dc143c; border-left: 2px solid #fff; color: #fff; font-weight: 700; }
.content { display: flex; flex-direction: column; }
.page-head { height: 61px; flex: none; display: flex; background: #ff6347; border-bottom: 1px solid #ff8a75; color: #fff5ee; font-size: 27.700px; line-height: 48px; padding-left: 15px; }
.page-head svg { fill: #fff5ee; margin: 11px 7px 0 0; }
.tools { display: flex; height: 41px; margin: 19px 6px 0 15px; font-size: 16.700px; line-height: 40px; }
.search { width: 561px; padding-left: 12.500px; border: 1px solid #ccc; border-right: 0; color: #bfbfbf; }
.go { width: 41px; display: flex; align-items: center; justify-content: center; }
.go, .add { background: #5f9ea0; border: 1px solid #4682a0; fill: #fff; color: #fff; }
.add { width: 181px; margin-left: auto; display: flex; gap: 3px; padding-left: 18px; }
.add svg { margin-top: 12px; }
h1 { margin: 121px 0 0 347px; font-size: 41.900px; line-height: 58px; color: #c0c0c0; }

/* Status bar */
.status { height: 27px; flex: none; display: flex; align-items: center; padding-left: 10px; background: #f3f3f3; border-top: 1px solid #c3c3c3; color: #333; font-size: 12.200px; line-height: 27px; }
.s-count { width: 97px; letter-spacing: .32px; }
.s-lang { width: 1215px; margin-left: 20px; flex: none; letter-spacing: .1px; }
.s-comt { width: 86px; margin-left: 2px; }
.view { width: 50px; height: 26px; flex: none; display: flex; align-items: center; justify-content: center; padding-right: 2px; }
.view.on { background: #c6c6c6; }
.zoomer { margin-left: 7px; }
.s-pct { width: 49px; margin-left: 16px; letter-spacing: -.1px; }

/* Windows taskbar */
.taskbar {
  height: 60px; flex: none; display: flex; align-items: center; color: #fff;
  background: linear-gradient(90deg, #1a2c42 0, #1b2b3f 90px, #1e2b33 240px, #222b32 560px, #232a33 700px, #212820 860px, #202933 1000px, #20282f 1180px, #1c2a42 1300px, #202b27 1400px, #1c2b33 1500px, #1d2a33 1570px, #35240f 1600px, #3a2714 1655px, #1e2838 1690px, #1f2638 1780px, #36212a 1830px, #1e2537 1880px, #1c2c3a 1920px);
}
.apps { display: flex; gap: 5px; margin-left: 661px; width: 945px; flex: none; }
.apps > span { position: relative; width: 50px; height: 50px; display: flex; align-items: center; justify-content: center; border-radius: 5px; }
.apps .cur { background: #35373f; box-shadow: inset 0 0 0 1px #41434a; }
.run::after { content: ""; position: absolute; bottom: 1px; left: 21px; width: 8px; height: 4px; border-radius: 2px; background: #9b9c9e; }
.cur::after { left: 15px; width: 20px; background: #4cc2ff; }
.cloud { margin: 4px 0 0 11px; }
.lang { width: 60px; margin-left: 3px; text-align: center; font-size: 14.500px; line-height: 20px; }
.sys { margin-left: 7px; }
.clock { width: 91px; text-align: right; font-size: 14px; line-height: 20px; }
```
